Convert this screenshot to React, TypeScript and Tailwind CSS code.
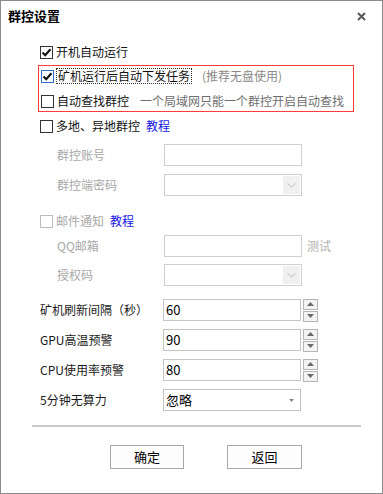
import React from 'react';

const font = { fontFamily: '"Noto Sans CJK SC", "Noto Sans", sans-serif' };

const Check: React.FC<{ checked?: boolean; disabled?: boolean; focus?: boolean }> = ({ checked, disabled, focus }) => (
  <span
    className={`flex h-[13px] w-[13px] shrink-0 items-center justify-center border bg-white ${
      disabled ? 'border-[#bcbcbc]' : focus ? 'border-[#2f6fc9]' : 'border-[#333]'
    }`}
  >
    {checked && (
      <svg width="11" height="11" viewBox="0 0 11 11">
        <path d="M1.5 5.5 L4.2 8.3 L9.5 2.2" fill="none" stroke="#111" strokeWidth="2.1" />
      </svg>
    )}
  </span>
);

const Field: React.FC<{ value?: string; disabled?: boolean }> = ({ value, disabled }) => (
  <div
    className={`flex h-[22px] w-[138px] items-center border px-[2px] text-[13px] ${
      disabled ? 'border-[#cfcfcf]' : 'border-[#c4c4c4] text-black'
    }`}
  >
    {value}
  </div>
);

const DisabledSelect: React.FC = () => (
  <div className="flex h-[22px] w-[138px] items-stretch justify-end border border-[#cfcfcf] p-[1px]">
    <div className="flex w-[17px] items-center justify-center bg-[#f0f0f0]">
      <svg width="9" height="5" viewBox="0 0 9 5">
        <path d="M0.5 0.5 L4.5 4 L8.5 0.5" fill="none" stroke="#bdbdbd" strokeWidth="1" />
      </svg>
    </div>
  </div>
);

const Spin: React.FC = () => (
  <div className="ml-[2px] flex flex-col gap-[1px]">
    {[0, 1].map((i) => (
      <div key={i} className="flex h-[11px] w-[15px] items-center justify-center border border-[#b5b5b5] bg-[#f3f3f3]">
        <svg width="7" height="4" viewBox="0 0 7 4">
          <path d={i === 0 ? 'M0 4 L3.5 0 L7 4 Z' : 'M0 0 L7 0 L3.5 4 Z'} fill="#6a6a6a" />
        </svg>
      </div>
    ))}
  </div>
);

const NumRow: React.FC<{ label: string; value: string }> = ({ label, value }) => (
  <div className="mt-[8px] flex h-[22px] items-center first:mt-[13px]">
    <span className="w-[123px] text-[12px] text-[#1a1a1a]">{label}</span>
    <Field value={value} />
    <Spin />
  </div>
);

export default function App() {
  return (
    <div className="flex h-[494px] w-[383px] flex-col border border-[#8c8c8c] bg-white" style={font}>
      <div className="flex h-[30px] shrink-0 items-center justify-between pl-[7px] pr-[16px]">
        <span className="text-[13px] font-bold text-black">群控设置</span>
        <svg width="9" height="9" viewBox="0 0 9 9">
          <path d="M1 1 L8 8 M8 1 L1 8" stroke="#5a5a5a" strokeWidth="2" />
        </svg>
      </div>

      <div className="flex flex-col pl-[39px] text-[12px]">
        <label className="mt-[11px] flex h-[20px] items-center gap-[3px] text-[#111]">
          <Check checked />
          <span>开机自动运行</span>
        </label>

        <div className="-ml-[2px] mt-[3px] flex w-[316px] flex-col gap-[5px] border border-[#ff3d3d] pl-[2px]">
          <label className="flex h-[20px] items-center gap-[2px] text-[#111]">
            <Check checked focus />
            <span className="border border-dotted border-[#333] px-[1px] leading-[14px]">矿机运行后自动下发任务</span>
            <span className="ml-[8px] text-[#8a8a8a]">(推荐无盘使用)</span>
          </label>
          <label className="flex h-[20px] items-center gap-[3px] text-[#111]">
            <Check />
            <span>自动查找群控</span>
            <span className="ml-[8px] text-[#6e6e6e]">一个局域网只能一个群控开启自动查找</span>
          </label>
        </div>

        <label className="mt-[4px] flex h-[20px] items-center gap-[3px] text-[#111]">
          <Check />
          <span>多地、异地群控</span>
          <span className="ml-[3px] text-[#1414e6]">教程</span>
        </label>

        <div className="mt-[8px] flex h-[22px] items-center pl-[17px]">
          <span className="w-[107px] text-[#a8a8a8]">群控账号</span>
          <Field disabled />
        </div>
        <div className="mt-[8px] flex h-[22px] items-center pl-[17px]">
          <span className="w-[107px] text-[#a8a8a8]">群控端密码</span>
          <DisabledSelect />
        </div>

        <label className="mt-[15px] flex h-[20px] items-center gap-[3px]">
          <Check disabled />
          <span className="text-[#a8a8a8]">邮件通知</span>
          <span className="ml-[3px] text-[#1414e6]">教程</span>
        </label>

        <div className="mt-[4px] flex h-[22px] items-center pl-[17px]">
          <span className="w-[107px] text-[#a8a8a8]">QQ邮箱</span>
          <Field disabled />
          <span className="ml-[5px] text-[#b0b0b0]">测试</span>
        </div>
        <div className="mt-[7px] flex h-[22px] items-center pl-[17px]">
          <span className="w-[107px] text-[#a8a8a8]">授权码</span>
          <DisabledSelect />
        </div>

        <div className="flex flex-col">
          <NumRow label="矿机刷新间隔（秒）" value="60" />
          <NumRow label="GPU高温预警" value="90" />
          <NumRow label="CPU使用率预警" value="80" />
        </div>

        <div className="mt-[8px] flex h-[22px] items-center">
          <span className="w-[123px] text-[#1a1a1a]">5分钟无算力</span>
          <div className="flex h-[22px] w-[138px] items-center justify-between border border-[#c4c4c4] pl-[2px] pr-[6px] text-[13px] text-black">
            <span>忽略</span>
            <svg width="5" height="3" viewBox="0 0 5 3">
              <path d="M0 0 L5 0 L2.5 3 Z" fill="#888" />
            </svg>
          </div>
        </div>
      </div>

      <div className="ml-[31px] mt-[14px] h-[2px] w-[329px] bg-[#c8c8c8]" />

      <div className="mt-[18px] flex gap-[43px] pl-[109px]">
        <button className="h-[24px] w-[74px] border border-[#a8a8a8] bg-[#fdfdfd] text-[13px] text-black">确定</button>
        <button className="h-[24px] w-[75px] border border-[#a8a8a8] bg-[#fdfdfd] text-[13px] text-black">返回</button>
      </div>
    </div>
  );
}
